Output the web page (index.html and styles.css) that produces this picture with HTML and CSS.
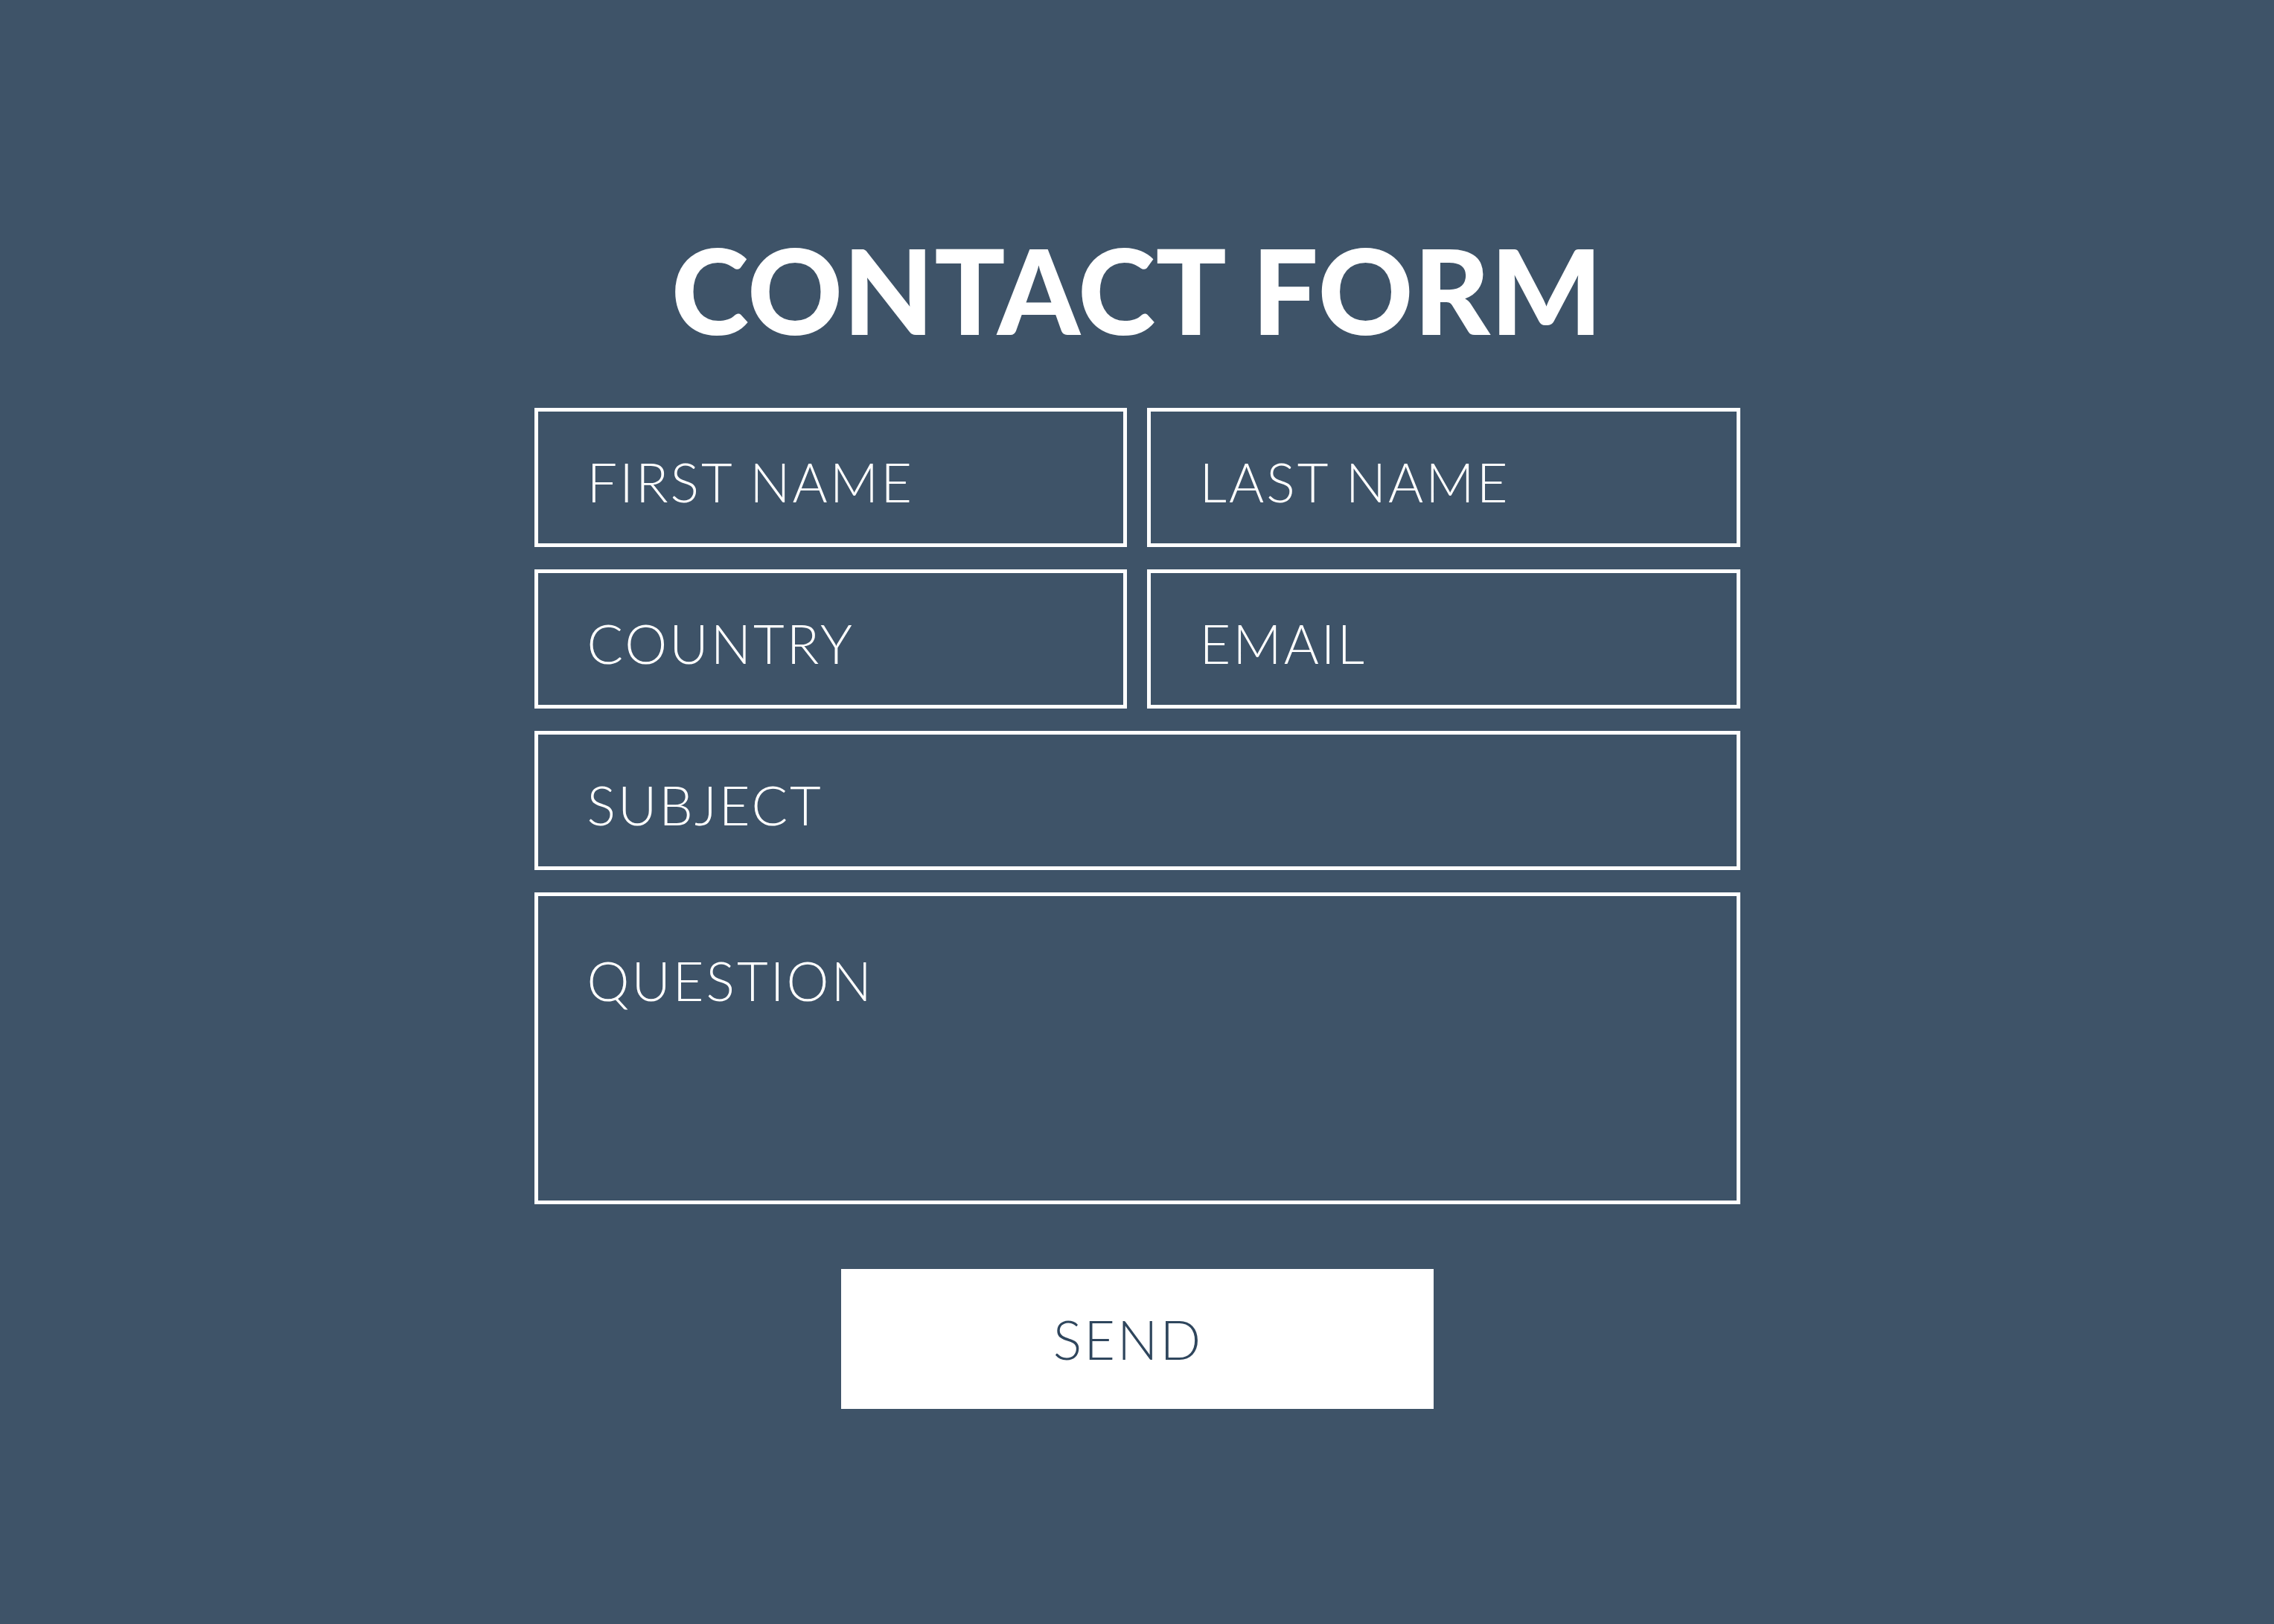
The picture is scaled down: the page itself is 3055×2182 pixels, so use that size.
FILE: index.html
```html
<!DOCTYPE html>
<html lang="en">
<head>
<meta charset="utf-8">
<title>Contact Form</title>
<link rel="stylesheet" href="styles.css">
</head>
<body>
<main class="page">
  <h1 class="title">CONTACT FORM</h1>
  <form class="form">
    <div class="field"><span class="label">FIRST NAME</span></div>
    <div class="field"><span class="label">LAST NAME</span></div>
    <div class="field"><span class="label">COUNTRY</span></div>
    <div class="field"><span class="label">EMAIL</span></div>
    <div class="field field-wide"><span class="label">SUBJECT</span></div>
    <div class="field field-wide field-area"><span class="label">QUESTION</span></div>
  </form>
  <button class="send" type="button">SEND</button>
</main>
</body>
</html>
```

FILE: styles.css
```css
html, body {
  margin: 0;
  padding: 0;
}
body {
  background: #3e5368;
  font-family: Lato, "Open Sans", "Liberation Sans", sans-serif;
  color: #ffffff;
  width: 3055px;
  height: 2182px;
  overflow: hidden;
}
.page {
  display: flex;
  flex-direction: column;
  align-items: center;
  padding-top: 310px;
}
.title {
  margin: 0;
  font-family: Lato, "Liberation Sans", sans-serif;
  font-weight: 900;
  font-size: 158px;
  line-height: 1;
  color: #ffffff;
  letter-spacing: 0.5px;
}
.form {
  margin-top: 80px;
  width: 1620px;
  display: grid;
  grid-template-columns: 796px 797px;
  column-gap: 27px;
  row-gap: 30px;
}
.field {
  box-sizing: border-box;
  height: 187px;
  border: 5px solid #ffffff;
  padding: 58px 0 0 66px;
}
.field-wide {
  grid-column: 1 / -1;
}
.field-area {
  height: 419px;
  padding-top: 77px;
}
.label {
  display: block;
  font-size: 72px;
  line-height: 1;
  font-weight: 300;
  letter-spacing: 3px;
  color: #ffffff;
}
.send {
  margin-top: 87px;
  width: 796px;
  height: 188px;
  border: 0;
  background: #ffffff;
  color: #2f465d;
  font-family: Lato, "Liberation Sans", sans-serif;
  font-size: 72px;
  font-weight: 300;
  letter-spacing: 3px;
  line-height: 1;
  padding: 0 24px 0 0;
}
```
